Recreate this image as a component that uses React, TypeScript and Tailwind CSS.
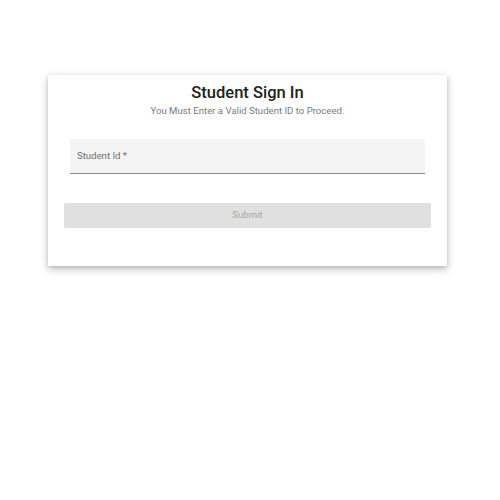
export default function App() {
  return (
    <div className="min-h-[500px] w-[500px] bg-white pt-[75px] font-['Roboto',sans-serif]">
      <div className="ml-[48px] w-[399px] bg-white px-4 pb-[38px] pt-[7px] shadow-[0_3px_8px_rgba(0,0,0,0.25),0_1px_3px_rgba(0,0,0,0.12)]">
        <div className="text-center">
          <h1 className="text-[16.5px] font-medium leading-[22px] text-[#212121]">Student Sign In</h1>
          <p className="text-[9.6px] leading-[14px] text-[#7a7a7a]">
            You Must Enter a Valid Student ID to Proceed.
          </p>
        </div>

        <form className="mt-[21px]">
          <div className="mx-[6px] flex h-[35px] items-center border-b border-[#8a8a8a] bg-[#f4f4f4] px-[7px]">
            <label className="text-[9.6px] text-[#6e6e6e]">Student Id *</label>
          </div>

          <button
            type="button"
            disabled
            className="mt-[29px] h-[25px] w-full rounded-[2px] bg-[#e0e0e0] text-[9.6px] text-[#a6a6a6]"
          >
            Submit
          </button>
        </form>
      </div>
    </div>
  );
}
